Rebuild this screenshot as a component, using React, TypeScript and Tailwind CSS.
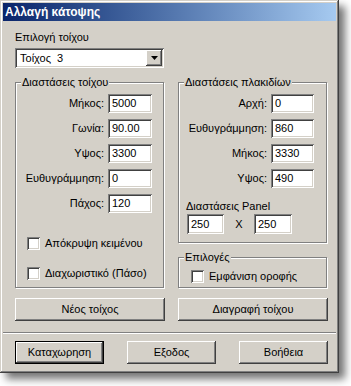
import React from 'react';

// Win2000 style bevels
const raised =
  'shadow-[inset_-1px_-1px_0_#404040,inset_1px_1px_0_#ffffff,inset_-2px_-2px_0_#808080,inset_2px_2px_0_#d4d0c8]';
const sunken =
  'shadow-[inset_1px_1px_0_#808080,inset_-1px_-1px_0_#ffffff,inset_2px_2px_0_#404040,inset_-2px_-2px_0_#d4d0c8]';
const etched = 'border border-[#808080] shadow-[inset_1px_1px_0_#ffffff,1px_1px_0_#ffffff]';

const Group: React.FC<{ title: string; className?: string; children?: React.ReactNode }> = ({
  title,
  className = '',
  children,
}) => (
  <div className={`${etched} flex flex-col ${className}`}>
    <span className="-mt-[7px] ml-[5px] self-start bg-[#d4d0c8] px-[1px] leading-[13px]">{title}</span>
    {children}
  </div>
);

const Edit: React.FC<{ value: string; className?: string }> = ({ value, className = '' }) => (
  <div className={`${sunken} bg-white flex items-center pl-[4px] ${className}`}>{value}</div>
);

const Field: React.FC<{ label: string; value: string; w: string }> = ({ label, value, w }) => (
  <div className="flex items-center justify-end gap-[4px]">
    <span>{label}</span>
    <Edit value={value} className={`h-[19px] ${w}`} />
  </div>
);

const Check: React.FC<{ label: string }> = ({ label }) => (
  <div className="flex items-center gap-[5px]">
    <div className={`w-[13px] h-[13px] bg-white ${sunken}`} />
    <span>{label}</span>
  </div>
);

const Btn: React.FC<{ label: string; className?: string; def?: boolean }> = ({ label, className = '', def }) => (
  <div
    className={`${raised} bg-[#d4d0c8] h-[23px] flex items-center justify-center ${
      def ? 'border border-black' : ''
    } ${className}`}
  >
    {label}
  </div>
);

export default function App() {
  return (
    <div className="min-h-screen bg-white font-['Liberation_Sans',Arial,sans-serif] text-black">
      <div className="w-[339px] h-[373px] bg-[#d4d0c8] p-[3px] flex flex-col shadow-[inset_-1px_-1px_0_#404040,inset_1px_1px_0_#d4d0c8,inset_-2px_-2px_0_#808080,inset_2px_2px_0_#ffffff,6px_6px_8px_rgba(0,0,0,0.55)]">
        {/* title bar */}
        <div className="h-[18px] shrink-0 bg-gradient-to-r from-[#0a246a] to-[#a6caf0] flex items-center pl-[2px] text-white font-bold text-[12px]">
          Αλλαγή κάτοψης
        </div>

        <div className="flex flex-col pl-[12px] pr-[8px] pt-[10px] text-[11px] leading-[13px]">
          <div>Επιλογή τοίχου</div>
          <div className={`mt-[4px] h-[20px] w-[149px] bg-white ${sunken} flex items-center justify-between pl-[5px] pr-[2px]`}>
            <span className="whitespace-pre">Τοίχος  3</span>
            <div className={`w-[16px] h-[16px] bg-[#d4d0c8] ${raised} flex items-center justify-center`}>
              <svg width="7" height="4" viewBox="0 0 7 4">
                <polygon points="0,0 7,0 3.5,4" fill="#000" />
              </svg>
            </div>
          </div>

          <div className="mt-[14px] grid grid-cols-[150px_150px] gap-x-[13px]">
            <Group title="Διαστάσεις τοίχου" className="w-[149px] h-[206px]">
              <div className="mt-[5px] flex flex-col gap-[6px] pr-[11px]">
                <Field label="Μήκος:" value="5000" w="w-[44px]" />
                <Field label="Γωνία:" value="90.00" w="w-[44px]" />
                <Field label="Υψος:" value="3300" w="w-[44px]" />
                <Field label="Ευθυγράμμηση:" value="0" w="w-[44px]" />
                <Field label="Πάχος:" value="120" w="w-[44px]" />
              </div>
              <div className="mt-[24px] ml-[11px] flex flex-col gap-[17px]">
                <Check label="Απόκρυψη κειμένου" />
                <Check label="Διαχωριστικό (Πάσο)" />
              </div>
            </Group>

            <div className="flex flex-col">
              <Group title="Διαστάσεις πλακιδίων" className="w-[149px] h-[161px]">
                <div className="mt-[5px] flex flex-col gap-[6px] pr-[12px]">
                  <Field label="Αρχή:" value="0" w="w-[43px]" />
                  <Field label="Ευθυγράμμηση:" value="860" w="w-[43px]" />
                  <Field label="Μήκος:" value="3330" w="w-[43px]" />
                  <Field label="Υψος:" value="490" w="w-[43px]" />
                </div>
                <div className="mt-[12px] ml-[7px]">Διαστάσεις Panel</div>
                <div className="mt-[1px] ml-[8px] flex items-center">
                  <Edit value="250" className="h-[20px] w-[37px]" />
                  <span className="w-[30px] text-center">X</span>
                  <Edit value="250" className="h-[20px] w-[38px]" />
                </div>
              </Group>
              <Group title="Επιλογές" className="mt-[14px] w-[149px] h-[31px]">
                <div className="mt-[6px] ml-[12px]">
                  <Check label="Εμφάνιση οροφής" />
                </div>
              </Group>
            </div>
          </div>

          <div className="mt-[10px] grid grid-cols-[150px_150px] gap-x-[13px]">
            <Btn label="Νέος τοίχος" />
            <Btn label="Διαγραφή τοίχου" />
          </div>

          <div className="mt-[11px] -ml-[12px] -mr-[8px] h-[2px] border-t border-[#808080] border-b border-b-white" />

          <div className="mt-[7px] flex justify-between">
            <Btn label="Καταχωρηση" def className="w-[89px]" />
            <Btn label="Εξοδος" className="w-[89px]" />
            <Btn label="Βοήθεια" className="w-[89px]" />
          </div>
        </div>
      </div>
    </div>
  );
}
